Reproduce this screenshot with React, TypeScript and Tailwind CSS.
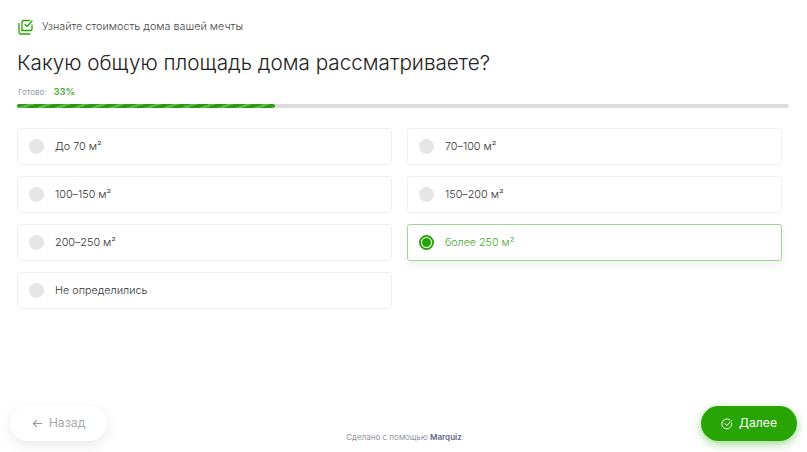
const options = [
    { label: 'До 70 м²' },
    { label: '70–100 м²' },
    { label: '100–150 м²' },
    { label: '150–200 м²' },
    { label: '200–250 м²' },
    { label: 'более 250 м²', checked: true },
    { label: 'Не определились' },
]

const Option = ({ label, checked }: { label: string; checked?: boolean }) => (
    <div
        className={
            checked
                ? 'flex h-[37px] items-center rounded-[3px] border border-[#9ed694] bg-white pl-[11px] shadow-[0_5px_10px_rgba(0,0,0,0.06)]'
                : 'flex h-[37px] items-center rounded-[3px] border border-[#f0f0f0] bg-white pl-[11px]'
        }
    >
        {checked ? (
            <span className="flex h-[15px] w-[15px] items-center justify-center rounded-full border-2 border-[#28a505] bg-white">
                <span className="h-[9px] w-[9px] rounded-full bg-[#28a505]" />
            </span>
        ) : (
            <span className="h-[15px] w-[15px] rounded-full bg-[#e6e6e6]" />
        )}
        <span className={checked ? 'ml-[11px] mt-[2px] text-[10.7px] font-light text-[#3fa928]' : 'ml-[11px] mt-[2px] text-[10.8px] font-light text-[#333333]'}>{label}</span>
    </div>
)

export default function App() {
    return (
        <div className="flex h-[452px] w-[807px] flex-col overflow-hidden bg-white font-['Inter',sans-serif]">
            <div className="flex items-center pl-[18px] pt-[18px]">
                <svg width="16" height="16" viewBox="0 0 16 16" fill="none" stroke="#28a505" strokeWidth="1.3" strokeLinecap="round" strokeLinejoin="round">
                    <path d="M4 11.5V3a1.5 1.5 0 0 1 1.5-1.5h6" />
                    <path d="M4 11.5h8.5A1.5 1.5 0 0 0 14 10V6" />
                    <path d="M1 4.5v9A1.5 1.5 0 0 0 2.5 15H12" />
                    <path d="M7 5.5l2 2 5-5.5" />
                </svg>
                <span className="ml-2 mt-[1px] text-[10.8px] font-light leading-4 text-[#444444]">Узнайте стоимость дома вашей мечты</span>
            </div>
            <h1 className="ml-[17px] mt-[13px] text-[20.7px] font-light leading-[30px] text-[#222222]">Какую общую площадь дома рассматриваете?</h1>
            <div className="ml-[18px] mt-[6px] flex items-center leading-4">
                <span className="text-[8px] font-light text-[#6f7890]">Готово:</span>
                <span className="ml-[7px] text-[9.5px] font-semibold text-[#45ab2e]">33%</span>
            </div>
            <div className="ml-[17px] mt-[4px] h-[4px] w-[772px] rounded-full bg-[#dcdcdc]">
                <div className="h-full w-[258px] rounded-full bg-[repeating-linear-gradient(160deg,#2a9a12_0px,#2a9a12_3.8px,#5cb84a_3.8px,#5cb84a_6.2px)]" />
            </div>
            <div className="ml-[17px] mt-[20px] grid w-[765px] grid-cols-2 gap-x-[15px] gap-y-[11px]">
                {options.map((o) => (
                    <Option key={o.label} label={o.label} checked={o.checked} />
                ))}
            </div>
            <div className="mt-auto mb-[11px] flex items-end justify-between pl-[10px] pr-[10px]">
                <button className="flex h-[35px] w-[97px] items-center justify-center rounded-full bg-white text-[12.3px] text-[#aaaaaa] shadow-[0_4px_14px_rgba(0,0,0,0.09)]">
                    <svg className="mr-[6px]" width="11" height="11" viewBox="0 0 12 12" fill="none" stroke="#999999" strokeWidth="1.2" strokeLinecap="round" strokeLinejoin="round">
                        <path d="M10.5 6h-9M5 2.5L1.5 6 5 9.5" />
                    </svg>
                    <span>Назад</span>
                </button>
                <div className="mb-[-4px] text-[8.1px] font-light leading-4 text-[#6f7488]">
                    Сделано с помощью <span className="font-semibold text-[#5f6787]">Marquiz</span>
                </div>
                <button className="flex h-[35px] w-[96px] items-center justify-center rounded-full bg-[#28a505] text-[12.2px] text-white shadow-[0_3px_10px_rgba(42,164,14,0.45)]">
                    <svg className="mr-[6px]" width="12" height="12" viewBox="0 0 12 12" fill="none" stroke="#ffffff" strokeWidth="1" strokeLinecap="round" strokeLinejoin="round">
                        <path d="M10.8 5.2A5 5 0 1 1 8.6 1.7" />
                        <path d="M3.8 5.6L5.8 7.6 10.6 2.6" />
                    </svg>
                    <span>Далее</span>
                </button>
            </div>
        </div>
    )
}
